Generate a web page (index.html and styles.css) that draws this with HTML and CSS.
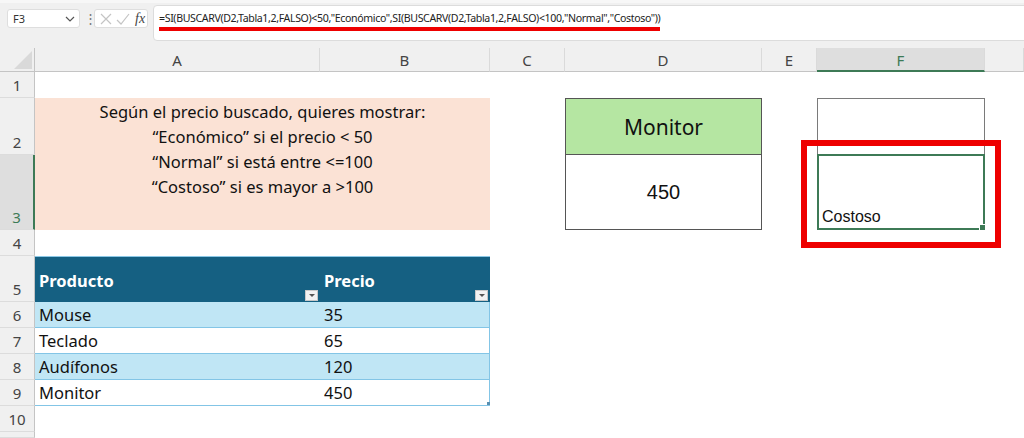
FILE: index.html
```html
<!DOCTYPE html>
<html lang="es">
<head>
  <meta charset="UTF-8">
  <title>BUSCARV con SI anidado</title>
  <link rel="stylesheet" href="styles.css">
</head>
<body>

  <div class="formula-bar">
    <div class="name-box">
      <span>F3</span>
      <svg width="10" height="6" viewBox="0 0 10 6"><polyline points="1,1 5,5 9,1" fill="none" stroke="#555" stroke-width="1.2"/></svg>
    </div>
    <div class="grip">&#8942;</div>
    <div class="fx-box">
      <svg width="14" height="14" viewBox="0 0 14 14"><path d="M2 2 L12 12 M12 2 L2 12" stroke="#c4c4c4" stroke-width="1.2"/></svg>
      <svg width="14" height="14" viewBox="0 0 14 14"><polyline points="1,8 5,12 13,2" fill="none" stroke="#c4c4c4" stroke-width="1.2"/></svg>
      <span class="fx">fx</span>
    </div>
    <div class="formula-input">
      <span class="formula-text">=SI(BUSCARV(D2,Tabla1,2,FALSO)&lt;50,"Económico",SI(BUSCARV(D2,Tabla1,2,FALSO)&lt;100,"Normal","Costoso"))</span>
    </div>
  </div>

  <div class="sheet">
    <div class="ch corner">
      <svg width="18" height="18" viewBox="0 0 18 18"><polygon points="18,0 18,18 0,18" fill="#d9d9d9"/></svg>
    </div>
    <div class="ch">A</div>
    <div class="ch">B</div>
    <div class="ch">C</div>
    <div class="ch">D</div>
    <div class="ch">E</div>
    <div class="ch sel">F</div>
    <div class="ch"></div>

    <div class="rh">1</div>
    <div class="rh">2</div>
    <div class="rh sel">3</div>
    <div class="rh">4</div>
    <div class="rh">5</div>
    <div class="rh">6</div>
    <div class="rh">7</div>
    <div class="rh">8</div>
    <div class="rh">9</div>
    <div class="rh">10</div>
    <div class="rh"></div>

    <div class="note">
      Según el precio buscado, quieres mostrar:<br>
      “Económico” si el precio &lt; 50<br>
      “Normal” si está entre &lt;=100<br>
      “Costoso” si es mayor a &gt;100
    </div>

    <div class="lookup-head">Monitor</div>
    <div class="lookup-val">450</div>

    <div class="result-head"></div>
    <div class="result-val">Costoso<span class="handle"></span></div>

    <div class="tbl">
      <div class="th">Producto<span class="filter"></span></div>
      <div class="th">Precio<span class="filter"></span></div>
      <div class="td band">Mouse</div>
      <div class="td band">35</div>
      <div class="td">Teclado</div>
      <div class="td">65</div>
      <div class="td band">Audífonos</div>
      <div class="td band">120</div>
      <div class="td">Monitor</div>
      <div class="td">450</div>
      <span class="resize"></span>
    </div>

    <div class="callout"></div>
  </div>

</body>
</html>
```

FILE: styles.css
```css
body {
  margin: 0;
  width: 1024px;
  height: 438px;
  overflow: hidden;
  background: #fff;
  font-family: "Noto Sans", "Open Sans", sans-serif;
  color: #111;
}

/* formula bar */

.formula-bar {
  height: 48px;
  background: #f0f0f0;
  border-top: 3px solid #f7f7f7;
  box-sizing: border-box;
  display: flex;
  align-items: flex-start;
  padding-left: 7px;
  overflow: hidden;
}

.name-box {
  margin-top: 6px;
  width: 73px;
  height: 19px;
  box-sizing: border-box;
  background: #fff;
  border: 1px solid #dedede;
  border-radius: 3px;
  display: flex;
  align-items: center;
  justify-content: space-between;
  padding: 0 4px 0 5px;
  font-size: 11px;
  color: #333;
}

.grip {
  margin: 6px 0 0 4px;
  width: 8px;
  font-size: 13px;
  line-height: 18px;
  color: #777;
}

.fx-box {
  margin: 6px 0 0 2px;
  width: 54px;
  height: 19px;
  box-sizing: border-box;
  background: #fff;
  border: 1px solid #dedede;
  border-radius: 3px;
  display: flex;
  align-items: center;
  gap: 3px;
  padding-left: 4px;
}

.fx {
  font-family: "Liberation Serif", serif;
  font-style: italic;
  font-size: 14px;
  color: #444;
  margin-left: 2px;
}

.formula-input {
  margin: 2px -12px 0 5px;
  flex: 1;
  height: 36px;
  background: #fff;
  border: 1px solid #dcdcdc;
  border-radius: 4px;
  padding: 5px 0 0 5px;
  box-sizing: border-box;
  display: flex;
  align-items: flex-start;
}

.formula-text {
  font-size: 10.6px;
  letter-spacing: -0.37px;
  line-height: 14px;
  color: #222;
  padding-bottom: 2px;
  border-bottom: 4px solid #ee0000;
}

/* sheet grid */

.sheet {
  position: relative;
  display: grid;
  grid-template-columns: 35px 285px 170px 75px 197px 55px 168px 39px;
  grid-template-rows: 24px 26px 57px 75px 26px 46px 26px 26px 26px 26px 26px 6px;
}

.ch {
  grid-row: 1;
  background: #f0f0f0;
  border-right: 1px solid #dadada;
  border-bottom: 1px solid #c4c4c4;
  text-align: center;
  font-size: 15px;
  line-height: 24px;
  color: #444;
}

.ch.corner {
  display: flex;
  align-items: flex-end;
  justify-content: flex-end;
  padding: 0 2px 2px 0;
  border-right-color: #c4c4c4;
}

.ch.sel {
  background: #dedede;
  color: #3d7a56;
  border-bottom: 2px solid #3d7a56;
}

.rh {
  grid-column: 1;
  background: #f0f0f0;
  border-right: 1px solid #c4c4c4;
  border-bottom: 1px solid #dcdcdc;
  display: flex;
  align-items: flex-end;
  justify-content: center;
  font-size: 15px;
  line-height: 20px;
  padding-bottom: 2px;
  color: #444;
}

.rh.sel {
  background: #dedede;
  color: #3d7a56;
  border-right: 2px solid #3d7a56;
}

.note {
  grid-column: 2 / 4;
  grid-row: 3 / 5;
  background: #fbe2d5;
  text-align: center;
  font-size: 16.5px;
  line-height: 25px;
  padding-top: 1px;
}

.lookup-head {
  grid-column: 5;
  grid-row: 3;
  background: #b5e6a2;
  border: 1px solid #555;
  display: flex;
  align-items: center;
  justify-content: center;
  font-size: 21px;
}

.lookup-val {
  grid-column: 5;
  grid-row: 4;
  border: 1px solid #555;
  border-top: none;
  display: flex;
  align-items: center;
  justify-content: center;
  font-family: "Liberation Sans", Arial, sans-serif;
  font-size: 20px;
}

.result-head {
  grid-column: 7;
  grid-row: 3;
  border: 1px solid #7a7a7a;
  border-bottom: none;
}

.result-val {
  grid-column: 7;
  grid-row: 4;
  position: relative;
  border: 2px solid #3d7a56;
  margin-top: -1px;
  display: flex;
  align-items: flex-end;
  padding: 0 0 2px 3px;
  font-family: "Liberation Sans", Arial, sans-serif;
  font-size: 16px;
}

.handle {
  position: absolute;
  right: -3px;
  bottom: -3px;
  width: 5px;
  height: 5px;
  background: #3d7a56;
  border: 1px solid #fff;
}

/* table */

.tbl {
  grid-column: 2 / 4;
  grid-row: 6 / 11;
  position: relative;
  display: grid;
  grid-template-columns: 285px 170px;
  grid-template-rows: 46px repeat(4, 26px);
  font-size: 16.5px;
}

.th {
  position: relative;
  background: #156082;
  color: #fff;
  font-weight: bold;
  padding: 12px 0 0 4px;
  border-top: 1px solid #8cc8e6;
}

.th:last-of-type {
  border-right: 1px solid #8cc8e6;
}

.filter {
  position: absolute;
  right: 2px;
  bottom: 1px;
  width: 13px;
  height: 11px;
  box-sizing: border-box;
  background: #f2f2f2;
  border: 1px solid #c8c8c8;
}

.filter::after {
  content: "";
  position: absolute;
  left: 3px;
  top: 3px;
  border-left: 3px solid transparent;
  border-right: 3px solid transparent;
  border-top: 3px solid #555;
}

.td {
  padding-left: 4px;
  line-height: 25px;
  border-bottom: 1px solid #83c5e6;
}

.td:nth-child(even) {
  border-right: 1px solid #83c5e6;
}

.td.band {
  background: #c0e6f5;
}

.resize {
  position: absolute;
  right: 0;
  bottom: 1px;
  width: 3px;
  height: 3px;
  background: #5a8fb0;
}

/* red annotation */

.callout {
  position: absolute;
  left: 801px;
  top: 92px;
  width: 200px;
  height: 108px;
  box-sizing: border-box;
  border: 6px solid #ee0000;
}
```
